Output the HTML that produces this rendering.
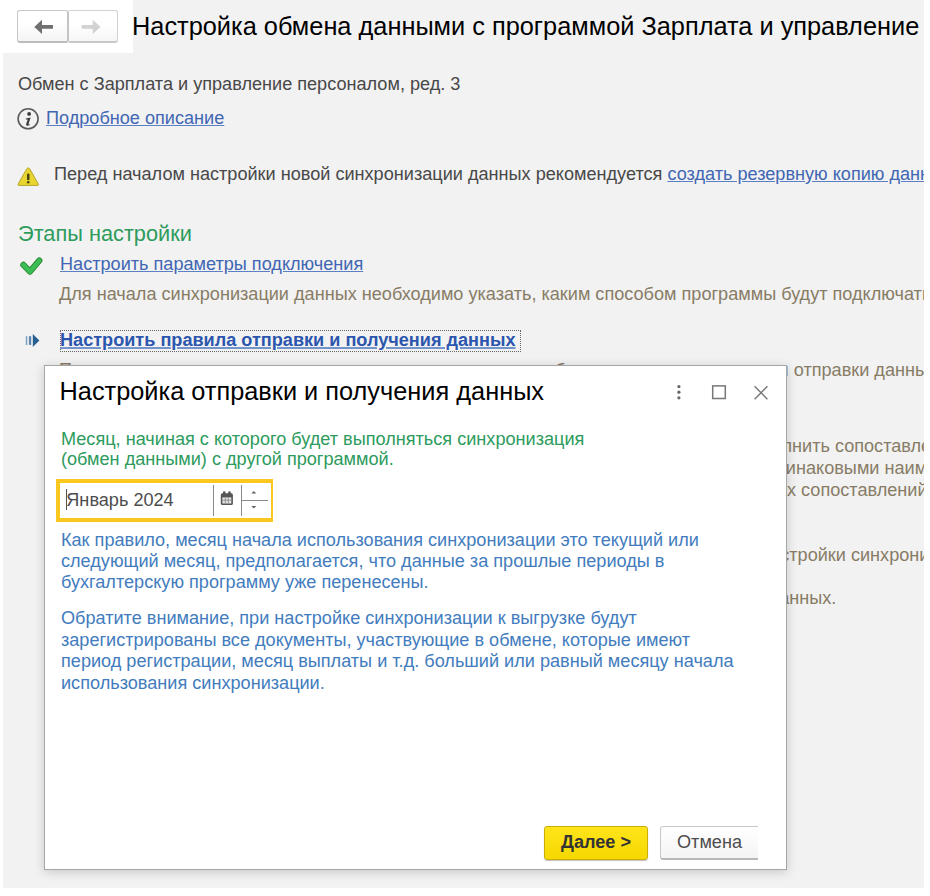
<!DOCTYPE html>
<html><head><meta charset="utf-8">
<style>
html,body{margin:0;padding:0;}
body{width:930px;height:896px;position:relative;overflow:hidden;background:#fff;font-family:"Liberation Sans",sans-serif;}
.a{position:absolute;white-space:nowrap;}
.t{font-size:18.13px;line-height:21px;}
#gray1{left:133px;top:0;width:791px;height:53px;background:#f2f2f2;}
#gray2{left:3px;top:53px;width:921px;height:835px;background:#f2f2f2;}
#clip{left:0;top:0;width:924px;height:888px;overflow:hidden;}
.txt{color:#484848;}
.lnk{color:#4066b3;text-decoration:underline;text-decoration-color:#5a7fc2;text-underline-offset:1.2px;}
.expl{color:#877c66;}
.blnk{color:#2c56ae;text-decoration:underline;text-decoration-color:#7393cb;text-decoration-thickness:2px;text-underline-offset:0.5px;}
.green{color:#2d9b5c;}
.blue{color:#427cbe;}
</style></head><body>
<div class="a" id="gray1"></div>
<div class="a" id="gray2"></div>
<div class="a" id="clip">
  <!-- nav buttons -->
  <div class="a" style="left:17px;top:10px;width:52px;height:33px;border:1px solid #c8c8c8;border-right:2px solid #c4c4c4;border-bottom:2px solid #bcbcbc;border-radius:3px;background:linear-gradient(#fff 40%,#f4f4f4);box-sizing:border-box;"></div>
  <div class="a" style="left:69px;top:10px;width:49px;height:33px;border:1px solid #d2d2d2;border-left:none;border-bottom:2px solid #c8c8c8;border-radius:0 3px 3px 0;background:linear-gradient(#fff 40%,#f6f6f6);box-sizing:border-box;"></div>
  <svg class="a" style="left:0;top:0" width="130" height="50">
    <path d="M34.3 26.9 L42 19.8 L42 25 L53 25 L53 28.8 L42 28.8 L42 34 Z" fill="#707070"/>
    <path d="M100.5 26.9 L92.7 19.8 L92.7 25 L81.7 25 L81.7 28.8 L92.7 28.8 L92.7 34 Z" fill="#d2d2d2"/>
  </svg>
  <div class="a" style="left:132px;top:11px;font-size:25.35px;line-height:30px;color:#000;">Настройка обмена данными с программой Зарплата и управление персоналом</div>

  <div class="a t txt" style="left:18px;top:74px;">Обмен с Зарплата и управление персоналом, ред. 3</div>
  <svg class="a" style="left:0;top:100px" width="50" height="40">
    <circle cx="28.1" cy="18.8" r="10" fill="none" stroke="#5a5a5a" stroke-width="1.6"/>
    <circle cx="29.1" cy="13.9" r="1.9" fill="#3a3a3a"/>
    <path d="M25.8 18.6 L30.6 17.4 L28.6 23.8 Q28.3 25 29.6 24.2 L30.2 24.6 Q28 26.4 26.6 25.6 Q25.8 25 26.3 23.6 L27.8 19.6 L25.9 19.4 Z" fill="#3a3a3a"/>
  </svg>
  <div class="a t" style="left:46px;top:108px;"><span class="lnk">Подробное описание</span></div>

  <svg class="a" style="left:0;top:160px" width="50" height="30">
    <path d="M28.25 8.2 Q29 7.6 29.6 8.6 L38.4 24.2 Q38.9 25.4 37.6 25.4 L18.9 25.4 Q17.6 25.4 18.1 24.2 L26.9 8.6 Q27.5 7.6 28.25 8.2 Z" fill="#e8d530" stroke="#b4a62c" stroke-width="1"/>
    <rect x="27" y="13.6" width="2.5" height="6.6" rx="1" fill="#4a4612"/>
    <circle cx="28.25" cy="22.3" r="1.3" fill="#4a4612"/>
  </svg>
  <div class="a t txt" style="left:54px;top:164px;">Перед началом настройки новой синхронизации данных рекомендуется <span class="lnk">создать резервную копию данных</span></div>

  <div class="a green" style="left:18px;top:221px;font-size:21.75px;line-height:25px;">Этапы настройки</div>

  <svg class="a" style="left:0;top:250px" width="50" height="30">
    <path d="M23.4 14.9 L30 21.6 L39.3 10.6" fill="none" stroke="#2a8a30" stroke-width="6.2" stroke-linecap="round" stroke-linejoin="round"/>
    <path d="M23.4 14.9 L30 21.6 L39.3 10.6" fill="none" stroke="#3abd55" stroke-width="4.4" stroke-linecap="round" stroke-linejoin="round"/>
  </svg>
  <div class="a t" style="left:60px;top:254px;"><span class="lnk">Настроить параметры подключения</span></div>
  <div class="a t expl" style="left:59px;top:284px;">Для начала синхронизации данных необходимо указать, каким способом программы будут подключаться</div>

  <svg class="a" style="left:0;top:325px" width="50" height="30">
    <rect x="25.8" y="11.2" width="1.5" height="8.7" fill="#7aa0c4"/>
    <rect x="28.9" y="11.2" width="2.3" height="8.7" fill="#5a86b0"/>
    <path d="M32.8 9 L39.4 15.5 L32.8 21.9 Z" fill="#2a6090"/>
  </svg>
  <div class="a" style="left:60px;top:330px;width:461px;height:22px;border:1px dotted #666;box-sizing:border-box;"></div>
  <div class="a t" style="left:60px;top:330px;font-weight:bold;"><span class="blnk">Настроить правила отправки и получения данных</span></div>

  <div class="a t expl" style="left:59px;top:360px;">Правила настроены в соответствии</div>
  <div class="a t expl" style="left:768px;top:360px;">ли отправки данных</div>
  <div class="a t expl" style="left:555px;top:360px;">б</div>
  <div class="a t expl" style="left:771.8px;top:436px;">олнить сопоставление объектов</div>
  <div class="a t expl" style="left:775.3px;top:457.5px;">динаковыми наименованиями</div>
  <div class="a t expl" style="left:774px;top:479.5px;">ых сопоставлений</div>
  <div class="a t expl" style="left:760.2px;top:545px;">настройки синхронизации</div>
  <div class="a t expl" style="left:768.6px;top:588px;">данных.</div>

  <!-- dialog -->
  <div class="a" id="dlg" style="left:44px;top:365px;width:743px;height:505px;box-sizing:border-box;border:1px solid #a6a6a6;background:#fff;box-shadow:0 2px 10px rgba(0,0,0,0.18);overflow:hidden;">
    <div class="a" style="left:14.5px;top:10px;font-size:25.35px;line-height:30px;color:#000;">Настройка отправки и получения данных</div>
    <svg class="a" style="left:620px;top:15px" width="120" height="40">
      <circle cx="13.9" cy="5.6" r="1.6" fill="#666"/>
      <circle cx="13.9" cy="11.2" r="1.6" fill="#666"/>
      <circle cx="13.9" cy="16.8" r="1.6" fill="#666"/>
      <rect x="47.7" y="4.9" width="12.6" height="12.6" fill="none" stroke="#777" stroke-width="1.5"/>
      <path d="M89.6 5.2 L102.4 18.2 M102.4 5.2 L89.6 18.2" stroke="#777" stroke-width="1.4"/>
    </svg>
    <div class="a t green" style="left:16px;top:63px;">Месяц, начиная с которого будет выполняться синхронизация</div>
    <div class="a t green" style="left:16px;top:83px;">(обмен данными) с другой программой.</div>

    <div class="a" style="left:11px;top:113px;width:216.5px;height:43px;box-sizing:border-box;border:4px solid #f9c71d;border-right-width:2.3px;background:#fff;"></div>
    <div class="a" style="left:21.2px;top:123px;width:1px;height:21px;background:#555;"></div>
    <div class="a t" style="left:21.3px;top:123.5px;color:#4d4d4d;">Январь 2024</div>
    <div class="a" style="left:168px;top:119px;width:1.2px;height:31px;background:#8a8a8a;"></div>
    <div class="a" style="left:195.5px;top:119px;width:1.2px;height:31px;background:#8a8a8a;"></div>
    <div class="a" style="left:196px;top:133.7px;width:26.5px;height:1.2px;background:#8a8a8a;"></div>
    <svg class="a" style="left:169px;top:119px" width="60" height="32">
      <rect x="6.8" y="8.3" width="12.1" height="11.8" rx="1.6" fill="#555"/>
      <rect x="9" y="6.3" width="2.4" height="3.4" rx="1" fill="#555"/>
      <rect x="14.3" y="6.3" width="2.4" height="3.4" rx="1" fill="#555"/>
      <rect x="8.4" y="12.4" width="8.9" height="6.1" fill="#e6e6e6"/>
      <path d="M8.4 15.2h8.9M11.3 12.4v6.1M14.3 12.4v6.1" stroke="#888" stroke-width="0.9"/>
      <path d="M37.3 8.5 L39.8 5.9 L42.3 8.5 Z" fill="#666"/>
      <path d="M37.3 21 L39.8 23.6 L42.3 21 Z" fill="#666"/>
    </svg>

    <div class="a t blue" style="left:16px;top:164px;">Как правило, месяц начала использования синхронизации это текущий или</div>
    <div class="a t blue" style="left:16px;top:185px;">следующий месяц, предполагается, что данные за прошлые периоды в</div>
    <div class="a t blue" style="left:16px;top:206px;">бухгалтерскую программу уже перенесены.</div>
    <div class="a t blue" style="left:16px;top:242px;">Обратите внимание, при настройке синхронизации к выгрузке будут</div>
    <div class="a t blue" style="left:16px;top:264px;">зарегистрированы все документы, участвующие в обмене, которые имеют</div>
    <div class="a t blue" style="left:16px;top:285px;">период регистрации, месяц выплаты и т.д. больший или равный месяцу начала</div>
    <div class="a t blue" style="left:16px;top:307px;">использования синхронизации.</div>

    <div class="a" style="left:499px;top:459.5px;width:103.5px;height:34px;box-sizing:border-box;border:1px solid #c9ae00;border-radius:3px;background:linear-gradient(#ffe41a,#f5d800);box-shadow:0 1px 1px rgba(0,0,0,0.25);"></div>
    <div class="a t" style="left:516px;top:466px;font-weight:bold;color:#333;">Далее &gt;</div>
    <div class="a" style="left:614.5px;top:459.5px;width:98.5px;height:36px;overflow:hidden;"><div class="a" style="left:0;top:0;width:120px;height:34px;box-sizing:border-box;border:1px solid #c8c8c8;border-bottom:2px solid #b8b8b8;border-radius:3px;background:linear-gradient(#fff,#f4f4f4);"></div></div>
    <div class="a t" style="left:632px;top:466px;color:#4d4d4d;">Отмена</div>
  </div>
</div>
</body></html>
